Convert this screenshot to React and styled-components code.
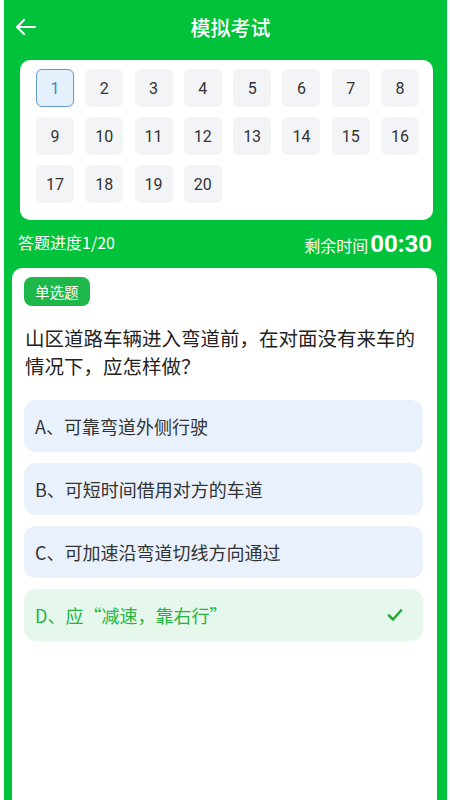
import styled, { createGlobalStyle } from "styled-components";

const GlobalStyle = createGlobalStyle`
  html, body {
    margin: 0;
    padding: 0;
    background: #ffffff;
  }
  body {
    font-family: Roboto, "Noto Sans CJK SC", "Noto Sans", sans-serif;
  }
`;

const Page = styled.div`
  margin: 0 3px 0 4px;
  min-height: 800px;
  background: #00c23b;
  display: flex;
  flex-direction: column;
`;

const Header = styled.header`
  height: 54px;
  display: grid;
  grid-template-columns: 44px 1fr 44px;
  align-items: center;
  padding: 0 0 0 10px;
`;

const BackButton = styled.button`
  border: none;
  background: transparent;
  padding: 0;
  width: 24px;
  height: 24px;
  display: flex;
  align-items: center;
  justify-content: center;
  cursor: pointer;
`;

const Title = styled.h1`
  margin: 0;
  text-align: center;
  color: #ffffff;
  font-size: 20px;
  font-weight: 500;
  font-family: "Noto Sans CJK SC", sans-serif;
`;

const GridCard = styled.div`
  margin: 6px 14px 0 16px;
  background: #ffffff;
  border-radius: 10px;
  padding: 9px 14px 17px 16px;
  display: grid;
  grid-template-columns: repeat(8, 38px);
  justify-content: space-between;
  row-gap: 10px;
`;

const Cell = styled.div`
  height: 38px;
  box-sizing: border-box;
  border-radius: 6px;
  display: flex;
  align-items: center;
  justify-content: center;
  font-size: 16px;
  background: ${(p) => (p.$active ? "#e4f1fd" : "#f3f4f6")};
  border: ${(p) => (p.$active ? "1.5px solid #5d9bd0" : "none")};
  color: ${(p) => (p.$active ? "#3d82c7" : "#333333")};
`;

const Progress = styled.div`
  height: 44px;
  padding: 0 15px 0 14px;
  display: flex;
  align-items: center;
  justify-content: space-between;
  color: #ffffff;
  font-size: 16px;
  font-family: "Noto Sans CJK SC", sans-serif;
`;

const Timer = styled.div`
  display: flex;
  align-items: baseline;
  padding-top: 4px;
`;

const TimeValue = styled.span`
  font-family: Roboto, sans-serif;
  font-weight: 700;
  font-size: 24px;
  margin-left: 2px;
`;

const QuestionCard = styled.div`
  flex: 1;
  margin: 4px 10px 0 8px;
  background: #ffffff;
  border-radius: 10px 10px 0 0;
  padding: 9px 14px 0 12px;
`;

const Tag = styled.span`
  display: inline-flex;
  align-items: center;
  height: 29px;
  padding: 0 11px;
  border-radius: 8px;
  background: #1db849;
  color: #ffffff;
  font-size: 14.5px;
  font-family: "Noto Sans CJK SC", sans-serif;
`;

const Question = styled.p`
  margin: 18px 0 0 1px;
  font-size: 19.5px;
  line-height: 28px;
  color: #222222;
  font-family: "Noto Sans CJK SC", sans-serif;
`;

const Options = styled.div`
  margin-top: 20px;
  display: flex;
  flex-direction: column;
  gap: 11px;
`;

const Option = styled.div`
  height: 52px;
  border-radius: 12px;
  padding: 0 20px 0 11px;
  display: flex;
  align-items: center;
  justify-content: space-between;
  font-size: 18px;
  font-family: "Noto Sans CJK SC", sans-serif;
  background: ${(p) => (p.$correct ? "#e6f8eb" : "#e8f1fc")};
  color: ${(p) => (p.$correct ? "#24b443" : "#333333")};
`;

const options = [
  "A、可靠弯道外侧行驶",
  "B、可短时间借用对方的车道",
  "C、可加速沿弯道切线方向通过",
  "D、应“减速，靠右行”",
];

export default function App() {
  const nums = Array.from({ length: 20 }, (_, i) => i + 1);
  return (
    <>
      <GlobalStyle />
      <Page>
        <Header>
          <BackButton aria-label="返回">
            <svg width="24" height="24" viewBox="0 0 24 24" fill="none" stroke="#fff" strokeWidth="2.2" strokeLinecap="round" strokeLinejoin="round">
              <path d="M21 12H3.5" />
              <path d="M10 5l-7 7 7 7" />
            </svg>
          </BackButton>
          <Title>模拟考试</Title>
          <span />
        </Header>

        <GridCard>
          {nums.map((n) => (
            <Cell key={n} $active={n === 1}>
              {n}
            </Cell>
          ))}
        </GridCard>

        <Progress>
          <span>答题进度1/20</span>
          <Timer>
            剩余时间<TimeValue>00:30</TimeValue>
          </Timer>
        </Progress>

        <QuestionCard>
          <Tag>单选题</Tag>
          <Question>山区道路车辆进入弯道前，在对面没有来车的情况下，应怎样做？</Question>
          <Options>
            {options.map((o, i) => (
              <Option key={o} $correct={i === 3}>
                <span>{o}</span>
                {i === 3 && (
                  <svg width="16" height="14" viewBox="0 0 16 14" fill="none" stroke="#2aa83a" strokeWidth="2.6" strokeLinecap="round" strokeLinejoin="round">
                    <path d="M2 7.5l4 4 8-9" />
                  </svg>
                )}
              </Option>
            ))}
          </Options>
        </QuestionCard>
      </Page>
    </>
  );
}
